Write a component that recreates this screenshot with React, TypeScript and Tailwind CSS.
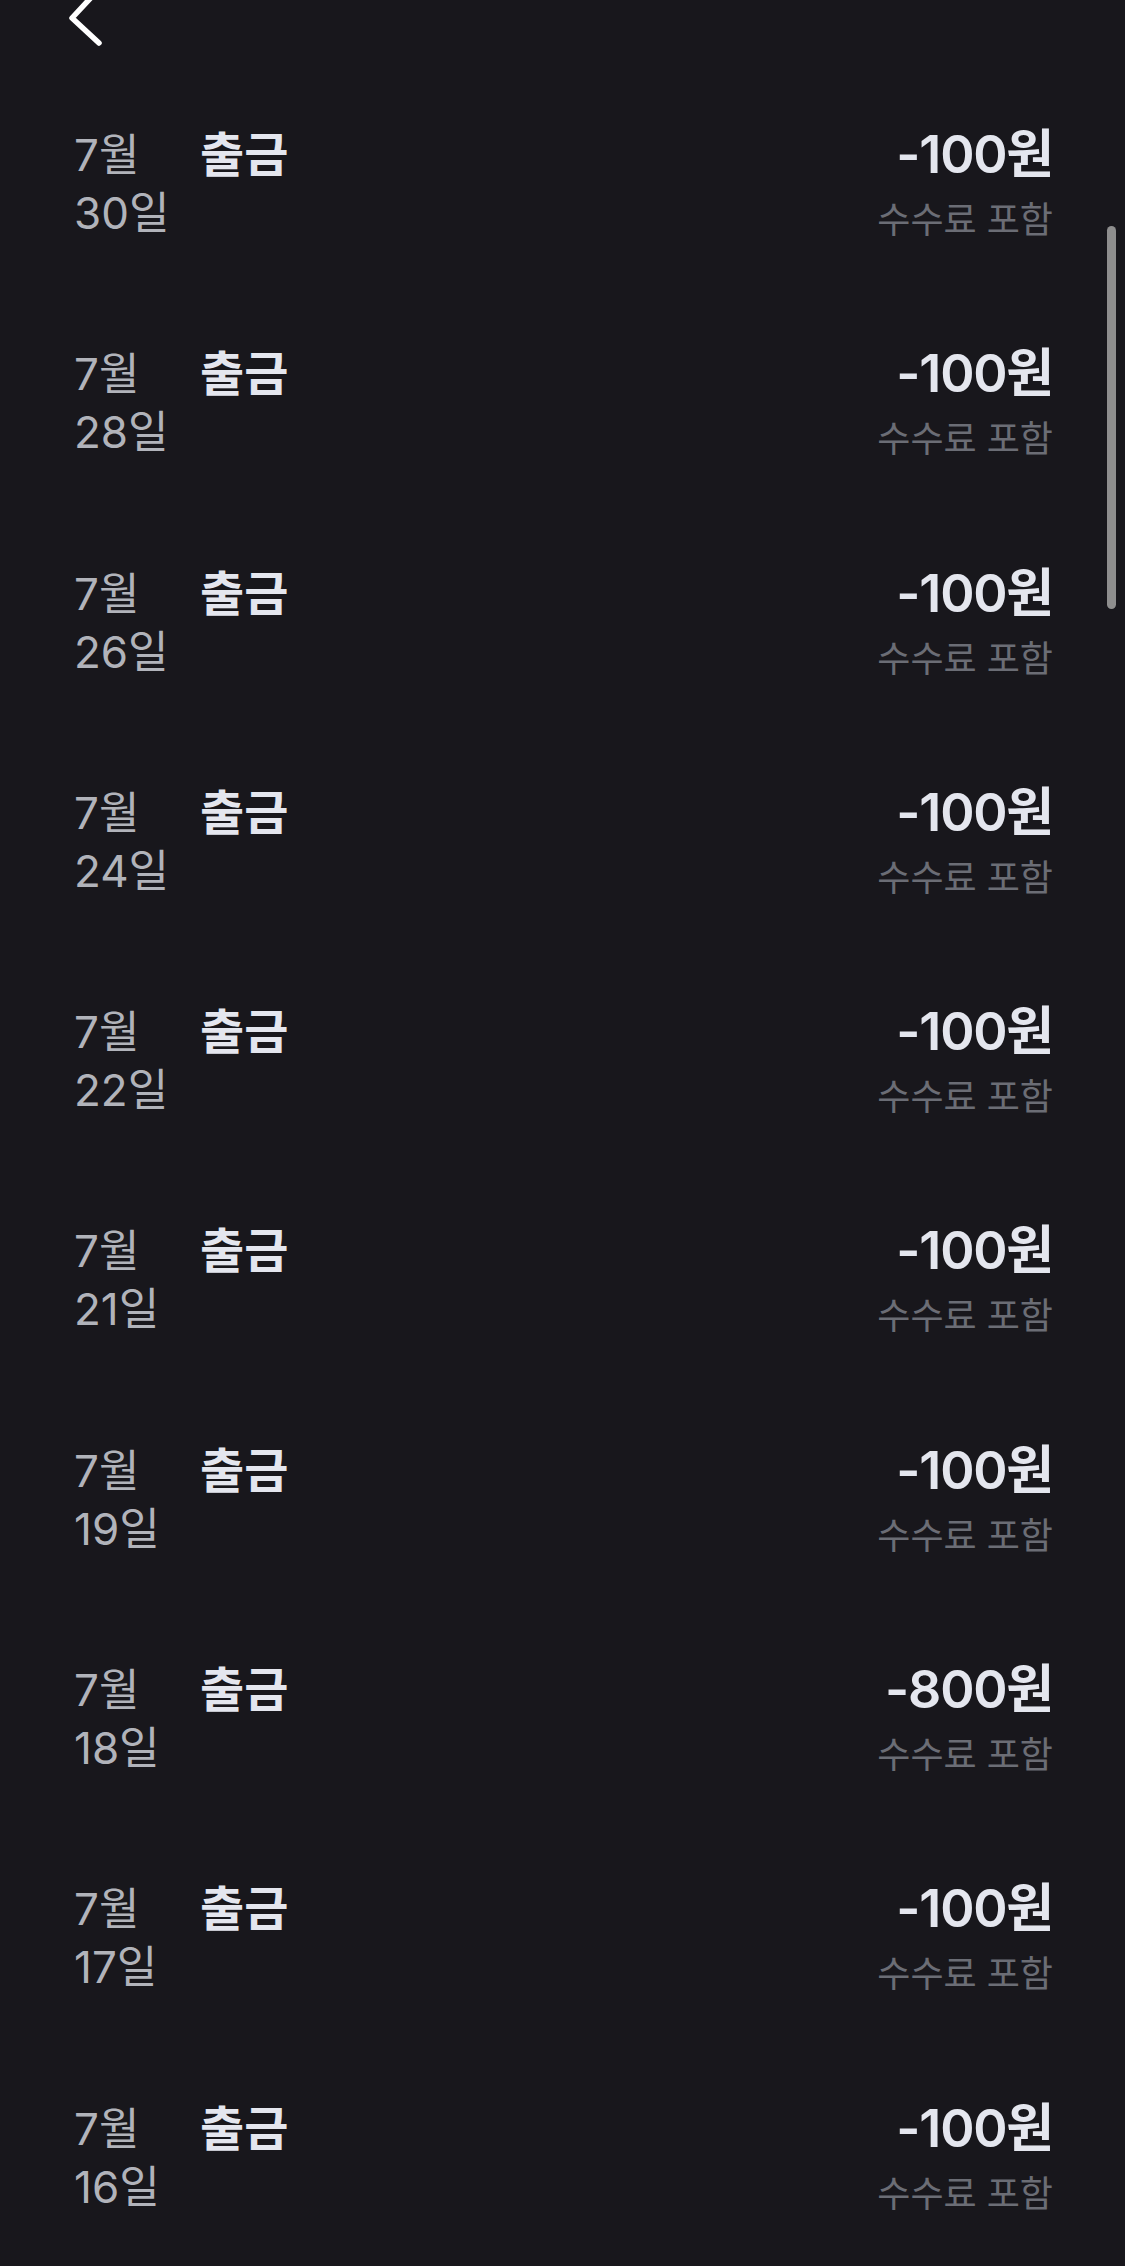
import React from 'react';

type Tx = { day: string; amount: string };

const rows: Tx[] = [
  { day: '30일', amount: '-100원' },
  { day: '28일', amount: '-100원' },
  { day: '26일', amount: '-100원' },
  { day: '24일', amount: '-100원' },
  { day: '22일', amount: '-100원' },
  { day: '21일', amount: '-100원' },
  { day: '19일', amount: '-100원' },
  { day: '18일', amount: '-800원' },
  { day: '17일', amount: '-100원' },
  { day: '16일', amount: '-100원' },
];

const font = { fontFamily: 'Inter, "Noto Sans CJK KR", sans-serif' };

function Row({ tx }: { tx: Tx }) {
  return (
    <div className="flex h-[219.3px] pl-[74px] pr-[72px] pt-[40px]">
      <div className="w-[126px] text-[44px] leading-[58px] text-[#b1b3ba]">
        <div>7월</div>
        <div>{tx.day}</div>
      </div>
      <div className="flex-1 text-[48px] leading-[58px] font-bold text-[#e4e6ee]">출금</div>
      <div className="text-right">
        <div className="text-[52px] leading-[58px] font-semibold tracking-[-1.2px] text-[#e4e6ee]">{tx.amount}</div>
        <div className="mt-[12px] text-[36px] leading-[48px] text-[#6b6d75]">수수료 포함</div>
      </div>
    </div>
  );
}

export default function App() {
  return (
    <div className="relative w-[1125px] h-[2266px] overflow-hidden bg-[#18171c]" style={font}>
      <div className="h-[100px] pl-[66px]">
        <svg width="42" height="60" viewBox="0 0 42 60" className="-mt-[14px]" fill="none">
          <path d="M33 3 L6 32 L33 57" stroke="#ffffff" strokeWidth="5.5" strokeLinecap="round" strokeLinejoin="round" />
        </svg>
      </div>
      {rows.map((tx, i) => (
        <Row key={i} tx={tx} />
      ))}
      <div className="absolute right-[9px] top-[226px] h-[383px] w-[9px] rounded-full bg-[#8e8e8e]" />
    </div>
  );
}
